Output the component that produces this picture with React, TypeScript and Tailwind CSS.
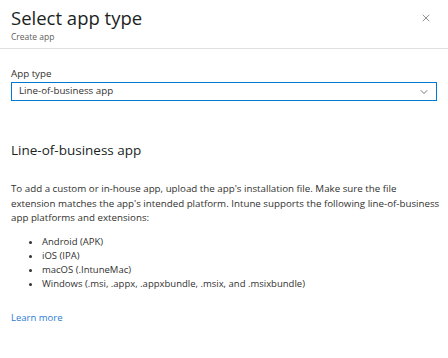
import { X, ChevronDown } from "lucide-react";

const platforms = [
  "Android (APK)",
  "iOS (IPA)",
  "macOS (.IntuneMac)",
  "Windows (.msi, .appx, .appxbundle, .msix, and .msixbundle)",
];

export default function App() {
  return (
    <div
      className="h-[358px] w-[448px] overflow-hidden bg-white text-[#323130]"
      style={{ fontFamily: '"Open Sans", "Noto Sans", sans-serif' }}
    >
      {/* header */}
      <header className="flex h-[49px] items-start justify-between border-b border-[#e1dfdd] pl-[11px] pr-[16px]">
        <div className="pt-[5px]">
          <h1 className="text-[18.5px] leading-[25px] text-[#201f1e]">
            Select app type
          </h1>
          <div className="mt-[1px] text-[8.5px] leading-[11px] text-[#605e5c]">
            Create app
          </div>
        </div>
        <button type="button" className="mt-[12px] text-[#484644]">
          <X size={12} strokeWidth={1.2} />
        </button>
      </header>

      <main className="px-[11px]">
        <label className="mt-[18px] block text-[9.75px] leading-[14px]">
          App type
        </label>
        <div className="mt-[1px] flex h-[19px] w-[426px] items-center justify-between border border-[#0078d4] pl-[7px] pr-[6px] text-[9.75px]">
          <span>Line-of-business app</span>
          <ChevronDown size={12} strokeWidth={1.3} className="text-[#323130]" />
        </div>

        <h2 className="mt-[39px] text-[13.5px] font-medium leading-[20px] text-[#201f1e]">
          Line-of-business app
        </h2>

        <p className="mt-[22px] whitespace-nowrap text-[9.75px] leading-[14.5px]">
          To add a custom or in-house app, upload the app's installation file.
          Make sure the file
          <br />
          extension matches the app's intended platform. Intune supports the
          following line-of-business
          <br />
          app platforms and extensions:
        </p>

        <ul className="mt-[9px] list-disc pl-[31px] text-[9.5px] leading-[14px]">
          {platforms.map((p) => (
            <li key={p}>{p}</li>
          ))}
        </ul>

        <a href="#" className="mt-[20px] block text-[9.5px] text-[#2b7cd3]">
          Learn more
        </a>
      </main>
    </div>
  );
}
